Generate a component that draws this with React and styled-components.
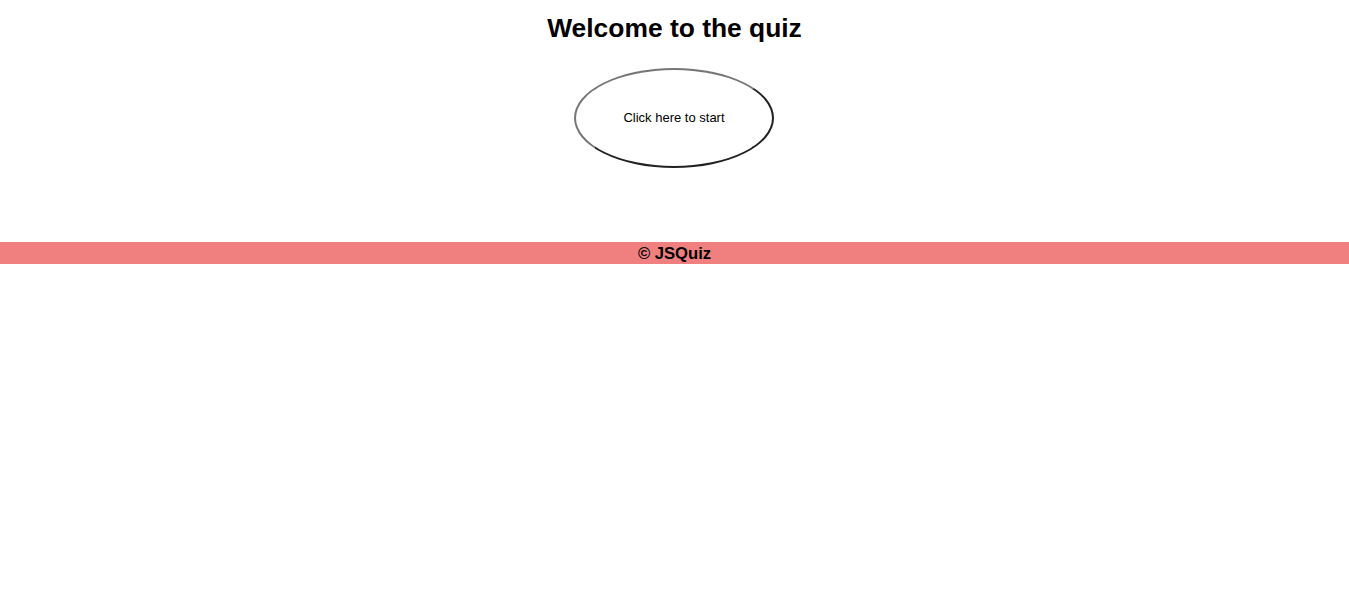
import styled, { createGlobalStyle } from "styled-components";

const GlobalStyle = createGlobalStyle`
  body {
    margin: 0;
    font-family: "Liberation Sans", Arial, sans-serif;
    background: #fff;
  }
`;

function App() {
  return (
    <>
      <GlobalStyle />
      <Main>
        <Title>Welcome to the quiz</Title>
        <StartButton>Click here to start</StartButton>
      </Main>
      <Footer>© JSQuiz</Footer>
    </>
  );
}

const Main = styled.main`
  display: flex;
  flex-direction: column;
  align-items: center;
  padding-top: 13px;
  height: 229px;
  box-sizing: border-box;
`;

const Title = styled.h1`
  margin: 0 0 25px;
  font-size: 26.4px;
  line-height: 30px;
  font-weight: bold;
  color: #000;
`;

const StartButton = styled.button`
  width: 200px;
  height: 100px;
  margin-right: 1px;
  padding: 0 6px 2px;
  border-radius: 50%;
  border: 2px outset #767676;
  background: #fff;
  font-family: "Liberation Sans", Arial, sans-serif;
  font-size: 13px;
  color: #000;
  cursor: pointer;
`;

const Footer = styled.footer`
  margin-top: 13px;
  background: lightcoral;
  text-align: center;
  font-weight: bold;
  font-size: 16.6px;
  line-height: 22px;
  padding-top: 1px;
  height: 22px;
  box-sizing: border-box;
  color: #000;
`;

export default App;
